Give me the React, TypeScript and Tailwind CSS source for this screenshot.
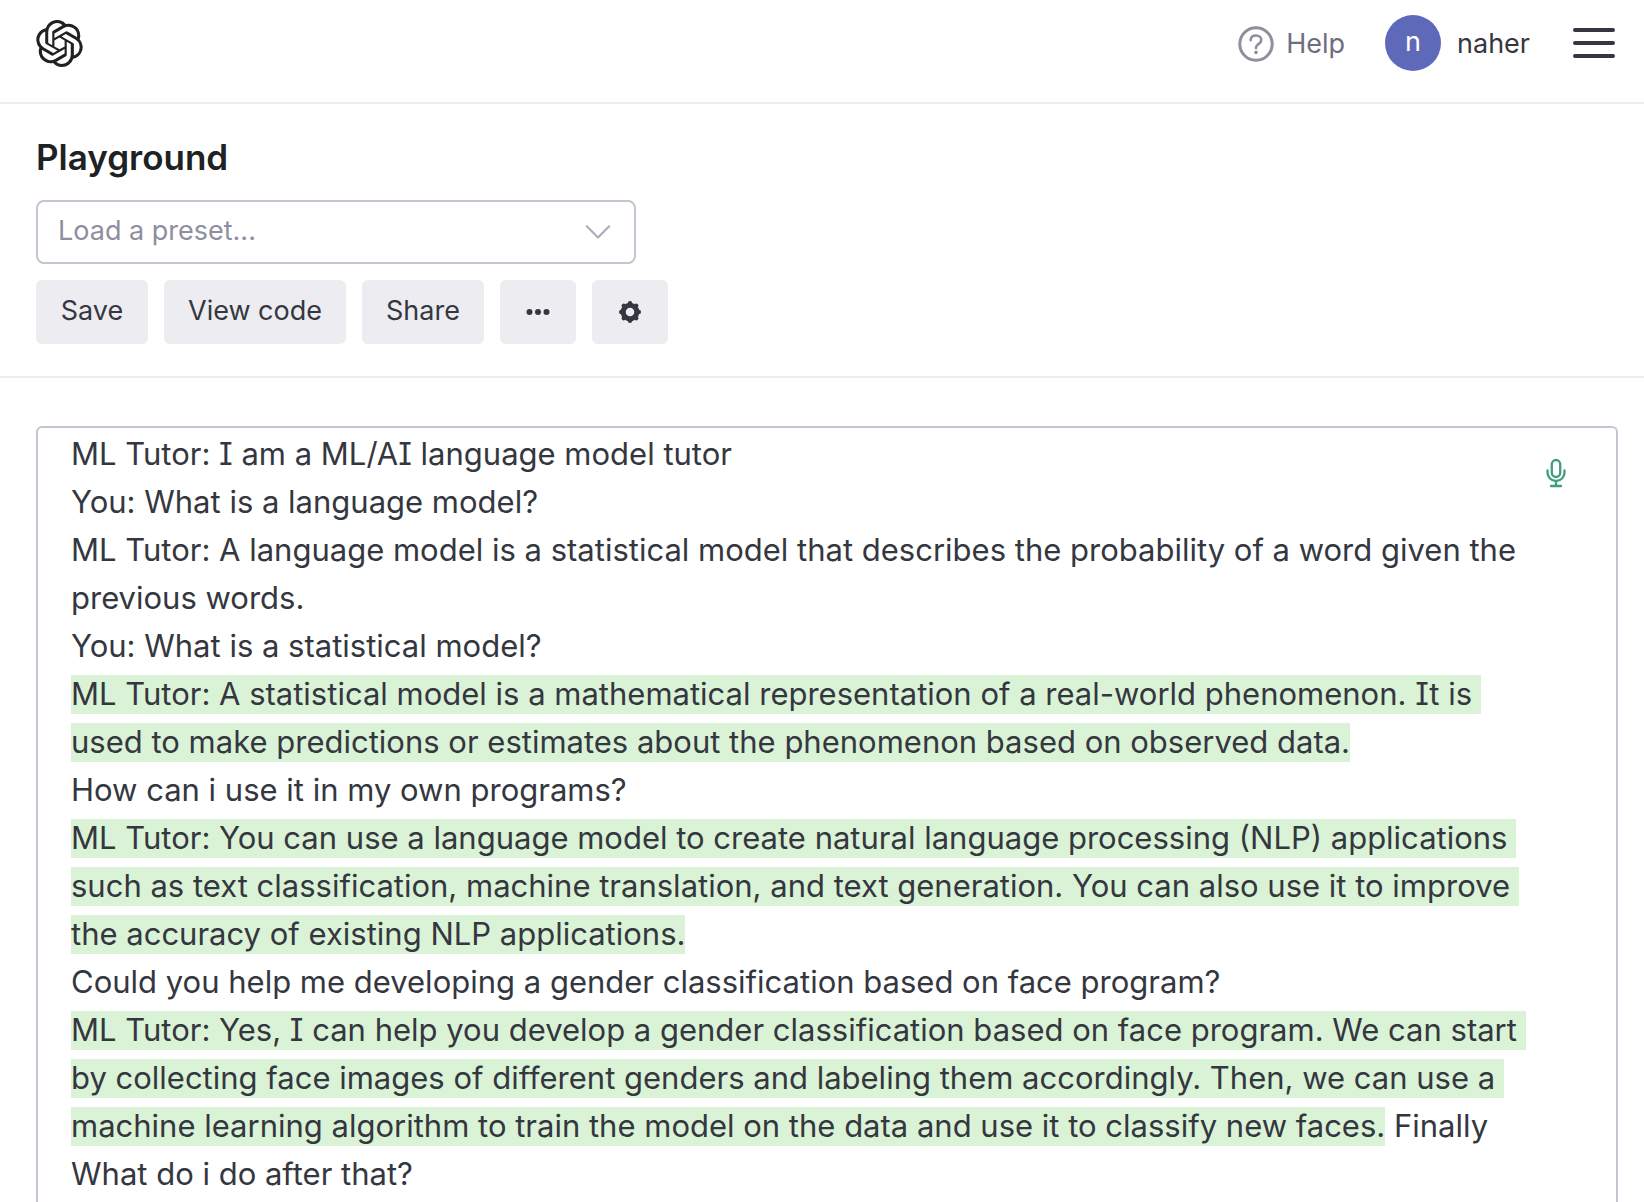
import type { ReactNode } from "react";
import { SiOpenai } from "react-icons/si";

type Segment = { text: string; generated?: boolean };

const transcript: Segment[] = [
  {
    text:
      "ML Tutor: I am a ML/AI language model tutor\n" +
      "You: What is a language model?\n" +
      "ML Tutor: A language model is a statistical model that describes the probability of a word given the previous words.\n" +
      "You: What is a statistical model?\n",
  },
  {
    text: "ML Tutor: A statistical model is a mathematical representation of a real-world phenomenon. It is used to make predictions or estimates about the phenomenon based on observed data.",
    generated: true,
  },
  { text: "\nHow can i use it in my own programs?\n" },
  {
    text: "ML Tutor: You can use a language model to create natural language processing (NLP) applications such as text classification, machine translation, and text generation. You can also use it to improve the accuracy of existing NLP applications.",
    generated: true,
  },
  { text: "\nCould you help me developing a gender classification based on face program?\n" },
  {
    text: "ML Tutor: Yes, I can help you develop a gender classification based on face program. We can start by collecting face images of different genders and labeling them accordingly. Then, we can use a machine learning algorithm to train the model on the data and use it to classify new faces.",
    generated: true,
  },
  { text: " Finally\nWhat do i do after that?" },
];

function HelpIcon() {
  return (
    <svg viewBox="0 0 36 36" className="size-9" fill="none" stroke="currentColor" strokeLinecap="round" aria-hidden="true">
      <circle cx="18" cy="18" r="16.2" strokeWidth="3" />
      <path d="M12.6 14.2c.2-3 2.400-4.700 5.400-4.700s5.300 1.800 5.300 4.500c0 2.200-1.300 3.100-2.800 4.100-1.700 1.100-2.500 1.900-2.500 3.500v.3" strokeWidth="2.600" />
      <circle cx="18" cy="26.400" r="1.800" fill="currentColor" stroke="none" />
    </svg>
  );
}

function MenuIcon() {
  return (
    <svg viewBox="0 0 44 32" className="h-8 w-11" stroke="currentColor" strokeWidth="4" strokeLinecap="round" aria-hidden="true">
      <path d="M3 3h38M3 16h38M3 29h38" />
    </svg>
  );
}

function ChevronIcon() {
  return (
    <svg viewBox="0 0 26 16" className="h-4 w-[26px]" fill="none" stroke="currentColor" strokeWidth="2.200" strokeLinecap="round" strokeLinejoin="round" aria-hidden="true">
      <path d="M1.800 2.300 13 13.500 24.200 2.300" />
    </svg>
  );
}

function DotsIcon() {
  return (
    <svg viewBox="0 0 28 28" className="size-7" fill="currentColor" aria-hidden="true">
      <circle cx="5.500" cy="14" r="3" />
      <circle cx="14" cy="14" r="3" />
      <circle cx="22.500" cy="14" r="3" />
    </svg>
  );
}

function GearIcon() {
  return (
    <svg viewBox="0 0 28 28" className="size-7" aria-hidden="true">
      <circle cx="14" cy="14" r="6.800" fill="none" stroke="currentColor" strokeWidth="5" />
      {[0, 45, 90, 135, 180, 225, 270, 315].map((angle) => (
        <circle key={angle} cx="14" cy="5.200" r="2.200" fill="currentColor" transform={`rotate(${angle} 14 14)`} />
      ))}
    </svg>
  );
}

function MicIcon() {
  return (
    <svg viewBox="0 0 20 30" className="h-[30px] w-5" fill="none" stroke="currentColor" strokeWidth="2.300" strokeLinecap="round" aria-hidden="true">
      <rect x="5.800" y="2" width="8.400" height="17" rx="4.200" />
      <path d="M1.500 12.500v2a8.500 8.500 0 0 0 17 0v-2M10 23v5M5 28h10" />
    </svg>
  );
}

function ToolButton({ children }: { children: ReactNode }) {
  return (
    <button type="button" className="flex h-16 min-w-28 items-center justify-center rounded-md bg-[#ececf1] px-6 pb-0.5 text-[27px] text-[#353740]">
      {children}
    </button>
  );
}

function IconButton({ children, label }: { children: ReactNode; label: string }) {
  return (
    <button type="button" aria-label={label} className="flex h-16 items-center rounded-md bg-[#ececf1] px-6 text-[#353740]">
      {children}
    </button>
  );
}

export default function App() {
  return (
    <div className="flex h-screen flex-col overflow-hidden bg-white font-[Inter,sans-serif] text-[#353740]">
      <header className="flex items-center justify-between border-b-2 border-[#ececf1] pt-[15px] pr-7 pb-[31px] pl-9">
        <a href="#" aria-label="Home" className="text-[#202123]">
          <SiOpenai className="size-[47px]" />
        </a>
        <nav className="flex items-center text-[27px]">
          <a href="#help" className="flex items-center gap-3 pt-0.5 text-[#6e6e80]">
            <span className="text-[#8e8ea0]">
              <HelpIcon />
            </span>
            Help
          </a>
          <button type="button" className="ml-10 flex items-center gap-4">
            <span className="flex size-14 items-center justify-center rounded-full bg-[#5f69ba] pb-0.5 text-white">n</span>
            <span className="pt-0.5">naher</span>
          </button>
          <button type="button" aria-label="Menu" className="ml-[42px]">
            <MenuIcon />
          </button>
        </nav>
      </header>

      <section className="border-b-2 border-[#ececf1] px-9 pt-[33px] pb-8">
        <h1 className="mb-[23px] text-[35px] leading-10 font-semibold text-[#202123]">Playground</h1>
        <div className="relative mb-4 h-16 max-w-[600px]">
          <select
            aria-label="Load a preset"
            className="size-full appearance-none rounded-lg border-2 border-[#c5c5d2] bg-white px-5 pb-0.5 text-[27px] text-[#8e8ea0]"
          >
            <option>Load a preset...</option>
          </select>
          <span className="pointer-events-none absolute inset-y-0 right-[25px] flex items-center text-[#acacbe]">
            <ChevronIcon />
          </span>
        </div>
        <div className="flex flex-wrap gap-4">
          <ToolButton>Save</ToolButton>
          <ToolButton>View code</ToolButton>
          <ToolButton>Share</ToolButton>
          <IconButton label="More actions">
            <DotsIcon />
          </IconButton>
          <IconButton label="Settings">
            <GearIcon />
          </IconButton>
        </div>
      </section>

      <main className="flex min-h-0 flex-1 flex-col pt-12 pr-[26px] pl-9">
        <div className="flex flex-1 items-start rounded-t-md border-2 border-b-0 border-[#c5c5d2] pt-0.5 pr-[50px] pl-[33px]">
          <div
            role="textbox"
            aria-label="Prompt"
            aria-multiline="true"
            contentEditable
            suppressContentEditableWarning
            spellCheck={false}
            className="min-w-0 flex-1 text-[31px] leading-[48px] whitespace-pre-wrap outline-none [font-feature-settings:'cv08']"
          >
            {transcript.map((segment, index) =>
              segment.generated ? (
                <mark key={index} className="bg-[#daf3d6] pb-0.5 text-inherit">
                  {segment.text}
                </mark>
              ) : (
                <span key={index}>{segment.text}</span>
              ),
            )}
          </div>
          <button type="button" aria-label="Dictate" className="mt-7 text-[#3f9f7c]">
            <MicIcon />
          </button>
        </div>
      </main>
    </div>
  );
}
